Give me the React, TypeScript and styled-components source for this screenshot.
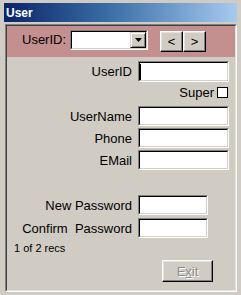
import React from "react";
import styled, { createGlobalStyle } from "styled-components";

const Global = createGlobalStyle`
  html, body { margin: 0; padding: 0; background: #d0ccc4; }
  body { font-family: "Liberation Sans", Arial, sans-serif; }
  * { box-sizing: border-box; }
`;

const Screen = styled.div`
  width: 241px;
  height: 295px;
  padding: 3px 4px 3px 4px;
  background: #d0ccc4;
  display: flex;
  flex-direction: column;
`;

const TitleBar = styled.div`
  height: 19px;
  flex: none;
  background: linear-gradient(to right, #0a246a 0%, #3a6ea5 45%, #a6caf0 100%);
  color: #ffffff;
  font: bold 12px "Liberation Sans", Arial, sans-serif;
  display: flex;
  align-items: center;
  padding-left: 2px;
`;

const ClientOuter = styled.div`
  flex: 1;
  margin: 2px 0 0 1px;
  border: 1px solid;
  border-color: #808080 #ffffff #ffffff #808080;
  display: flex;
  flex-direction: column;
`;

const ClientInner = styled.div`
  flex: 1;
  border: 1px solid;
  border-color: #404040 #e6e2da #e6e2da #404040;
  display: flex;
  flex-direction: column;
  background: #d0ccc4;
`;

const Header = styled.div`
  height: 31px;
  flex: none;
  background: #c48f8f;
  display: flex;
  align-items: flex-start;
  padding-left: 15px;
`;

const HeaderLabel = styled.span`
  margin-top: 4px;
  height: 20px;
  line-height: 20px;
  font-size: 13px;
  color: #000;
`;

const Sunken = styled.div<{ $w: number; $h: number }>`
  width: ${(p) => p.$w}px;
  height: ${(p) => p.$h}px;
  border: 1px solid;
  border-color: #808080 #ffffff #ffffff #808080;
  flex: none;
`;

const SunkenInner = styled.div`
  width: 100%;
  height: 100%;
  border: 1px solid;
  border-color: #000000 #d4d0c8 #d4d0c8 #000000;
  background: #ffffff;
  display: flex;
  align-items: center;
  justify-content: flex-start;
`;

const Combo = styled(Sunken)`
  margin-left: 4px;
  margin-top: 4px;
`;

const ComboInner = styled(SunkenInner)`
  justify-content: flex-end;
  align-items: stretch;
`;

const DropButton = styled.div`
  width: 16px;
  border: 1px solid;
  border-color: #d4d0c8 #000000 #000000 #d4d0c8;
  box-shadow: inset 1px 1px #ffffff, inset -1px -1px #808080;
  background: #d0ccc4;
  display: flex;
  align-items: center;
  justify-content: center;
`;

const NavGroup = styled.div`
  margin-left: 12px;
  margin-top: 5px;
  display: flex;
`;

const RaisedButton = styled.div<{ $w: number; $h: number }>`
  width: ${(p) => p.$w}px;
  height: ${(p) => p.$h}px;
  border: 1px solid;
  border-color: #ffffff #000000 #000000 #ffffff;
  box-shadow: inset -1px -1px #808080, inset 1px 1px #e6e2da;
  background: #d0ccc4;
  display: flex;
  align-items: center;
  justify-content: center;
  font-size: 13px;
  color: #000;
  flex: none;
`;

const Row = styled.div<{ $top: number }>`
  margin-top: ${(p) => p.$top}px;
  display: grid;
  grid-template-columns: 125px auto;
  column-gap: 6px;
  align-items: center;
`;

const Label = styled.span`
  text-align: right;
  font-size: 13px;
  color: #000;
  white-space: pre;
`;

const Caret = styled.span`
  width: 1px;
  height: 16px;
  margin-left: 0px;
  background: #000;
`;

const SuperRow = styled.div<{ $top: number }>`
  margin-top: ${(p) => p.$top}px;
  height: 11px;
  display: flex;
  align-items: center;
  justify-content: flex-end;
  padding-right: 7px;
  gap: 3px;
`;

const CheckBox = styled.span`
  width: 11px;
  height: 11px;
  border: 1px solid #000;
  background: #fff;
  flex: none;
`;

const Recs = styled.div<{ $top: number }>`
  margin-top: ${(p) => p.$top}px;
  padding-left: 7px;
  font-size: 11px;
  line-height: 13px;
  color: #000;
`;

const ExitButton = styled(RaisedButton)<{ $top: number }>`
  margin-top: ${(p) => p.$top}px;
  align-self: flex-end;
  margin-right: 22px;
  color: #8c8c8c;
  text-shadow: 1px 1px 0 #ffffff;
`;

const Field = ({ w, h, caret }: { w: number; h: number; caret?: boolean }) => (
  <Sunken $w={w} $h={h}>
    <SunkenInner>{caret && <Caret />}</SunkenInner>
  </Sunken>
);

export default function App() {
  return (
    <>
      <Global />
      <Screen>
        <TitleBar>User</TitleBar>
        <ClientOuter>
          <ClientInner>
            <Header>
              <HeaderLabel>UserID:</HeaderLabel>
              <Combo $w={78} $h={20}>
                <ComboInner>
                  <DropButton>
                    <svg width="7" height="4" viewBox="0 0 7 4">
                      <path d="M0 0H7L3.5 4Z" fill="#000" />
                    </svg>
                  </DropButton>
                </ComboInner>
              </Combo>
              <NavGroup>
                <RaisedButton $w={23} $h={21}>&lt;</RaisedButton>
                <RaisedButton $w={23} $h={21}>&gt;</RaisedButton>
              </NavGroup>
            </Header>

            <Row $top={4}>
              <Label>UserID</Label>
              <Field w={91} h={21} caret />
            </Row>

            <SuperRow $top={5}>
              <Label>Super</Label>
              <CheckBox />
            </SuperRow>

            <Row $top={8}>
              <Label>UserName</Label>
              <Field w={91} h={20} />
            </Row>
            <Row $top={2}>
              <Label>Phone</Label>
              <Field w={91} h={20} />
            </Row>
            <Row $top={2}>
              <Label>EMail</Label>
              <Field w={91} h={20} />
            </Row>

            <Row $top={25}>
              <Label>New Password</Label>
              <Field w={70} h={20} />
            </Row>
            <Row $top={3}>
              <Label>{"Confirm  Password"}</Label>
              <Field w={70} h={20} />
            </Row>

            <Recs $top={4}>1 of 2 recs</Recs>

            <ExitButton $w={51} $h={22} $top={5}>
              E<u>x</u>it
            </ExitButton>
          </ClientInner>
        </ClientOuter>
      </Screen>
    </>
  );
}
